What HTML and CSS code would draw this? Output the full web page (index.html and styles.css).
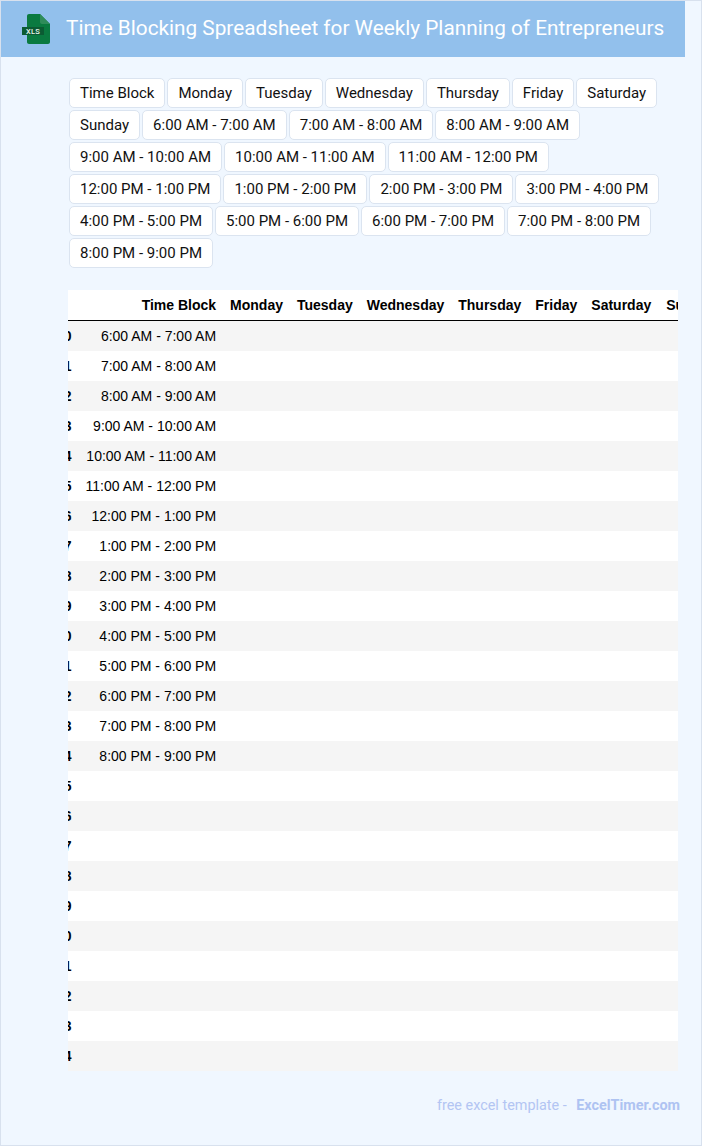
FILE: index.html
```html
<!DOCTYPE html>
<html lang="en">
<head>
<meta charset="utf-8">
<title>Time Blocking Spreadsheet for Weekly Planning of Entrepreneurs</title>
<link rel="stylesheet" href="styles.css">
</head>
<body>
<div class="page">
  <header class="banner">
    <svg class="logo" width="28" height="30" viewBox="0 0 28 30" aria-hidden="true">
      <path d="M5 2C5 .9 5.900 0 7 0h11l10 10v18c0 1.100-.9 2-2 2H7c-1.100 0-2-.9-2-2z" fill="#0a7a40"/>
      <path d="M18 0l10 10h-8c-1.100 0-2-.9-2-2z" fill="#2f8c5a"/>
      <rect x="0" y="13" width="22" height="8" fill="#0b5b33"/>
      <text x="11" y="19.800" class="logo-text" text-anchor="middle">XLS</text>
    </svg>
    <h1 class="title">Time Blocking Spreadsheet for Weekly Planning of Entrepreneurs</h1>
  </header>
  <main class="content">
    <div class="tags">
      <span class="tag">Time Block</span>
      <span class="tag">Monday</span>
      <span class="tag">Tuesday</span>
      <span class="tag">Wednesday</span>
      <span class="tag">Thursday</span>
      <span class="tag">Friday</span>
      <span class="tag">Saturday</span>
      <span class="tag">Sunday</span>
      <span class="tag">6:00 AM - 7:00 AM</span>
      <span class="tag">7:00 AM - 8:00 AM</span>
      <span class="tag">8:00 AM - 9:00 AM</span>
      <span class="tag">9:00 AM - 10:00 AM</span>
      <span class="tag">10:00 AM - 11:00 AM</span>
      <span class="tag">11:00 AM - 12:00 PM</span>
      <span class="tag">12:00 PM - 1:00 PM</span>
      <span class="tag">1:00 PM - 2:00 PM</span>
      <span class="tag">2:00 PM - 3:00 PM</span>
      <span class="tag">3:00 PM - 4:00 PM</span>
      <span class="tag">4:00 PM - 5:00 PM</span>
      <span class="tag">5:00 PM - 6:00 PM</span>
      <span class="tag">6:00 PM - 7:00 PM</span>
      <span class="tag">7:00 PM - 8:00 PM</span>
      <span class="tag">8:00 PM - 9:00 PM</span>
    </div>
    <div class="table-wrap">
      <table class="sheet">
        <thead>
          <tr><th></th><th>Time Block</th><th>Monday</th><th>Tuesday</th><th>Wednesday</th><th>Thursday</th><th>Friday</th><th>Saturday</th><th class="last-col">Sunday</th></tr>
        </thead>
        <tbody>
          <tr><th>0</th><td>6:00 AM - 7:00 AM</td><td></td><td></td><td></td><td></td><td></td><td></td><td></td></tr>
          <tr><th>1</th><td>7:00 AM - 8:00 AM</td><td></td><td></td><td></td><td></td><td></td><td></td><td></td></tr>
          <tr><th>2</th><td>8:00 AM - 9:00 AM</td><td></td><td></td><td></td><td></td><td></td><td></td><td></td></tr>
          <tr><th>3</th><td>9:00 AM - 10:00 AM</td><td></td><td></td><td></td><td></td><td></td><td></td><td></td></tr>
          <tr><th>4</th><td>10:00 AM - 11:00 AM</td><td></td><td></td><td></td><td></td><td></td><td></td><td></td></tr>
          <tr><th>5</th><td>11:00 AM - 12:00 PM</td><td></td><td></td><td></td><td></td><td></td><td></td><td></td></tr>
          <tr><th>6</th><td>12:00 PM - 1:00 PM</td><td></td><td></td><td></td><td></td><td></td><td></td><td></td></tr>
          <tr><th>7</th><td>1:00 PM - 2:00 PM</td><td></td><td></td><td></td><td></td><td></td><td></td><td></td></tr>
          <tr><th>8</th><td>2:00 PM - 3:00 PM</td><td></td><td></td><td></td><td></td><td></td><td></td><td></td></tr>
          <tr><th>9</th><td>3:00 PM - 4:00 PM</td><td></td><td></td><td></td><td></td><td></td><td></td><td></td></tr>
          <tr><th>10</th><td>4:00 PM - 5:00 PM</td><td></td><td></td><td></td><td></td><td></td><td></td><td></td></tr>
          <tr><th>11</th><td>5:00 PM - 6:00 PM</td><td></td><td></td><td></td><td></td><td></td><td></td><td></td></tr>
          <tr><th>12</th><td>6:00 PM - 7:00 PM</td><td></td><td></td><td></td><td></td><td></td><td></td><td></td></tr>
          <tr><th>13</th><td>7:00 PM - 8:00 PM</td><td></td><td></td><td></td><td></td><td></td><td></td><td></td></tr>
          <tr><th>14</th><td>8:00 PM - 9:00 PM</td><td></td><td></td><td></td><td></td><td></td><td></td><td></td></tr>
          <tr><th>15</th><td></td><td></td><td></td><td></td><td></td><td></td><td></td><td></td></tr>
          <tr><th>16</th><td></td><td></td><td></td><td></td><td></td><td></td><td></td><td></td></tr>
          <tr><th>17</th><td></td><td></td><td></td><td></td><td></td><td></td><td></td><td></td></tr>
          <tr><th>18</th><td></td><td></td><td></td><td></td><td></td><td></td><td></td><td></td></tr>
          <tr><th>19</th><td></td><td></td><td></td><td></td><td></td><td></td><td></td><td></td></tr>
          <tr><th>20</th><td></td><td></td><td></td><td></td><td></td><td></td><td></td><td></td></tr>
          <tr><th>21</th><td></td><td></td><td></td><td></td><td></td><td></td><td></td><td></td></tr>
          <tr><th>22</th><td></td><td></td><td></td><td></td><td></td><td></td><td></td><td></td></tr>
          <tr><th>23</th><td></td><td></td><td></td><td></td><td></td><td></td><td></td><td></td></tr>
          <tr><th>24</th><td></td><td></td><td></td><td></td><td></td><td></td><td></td><td></td></tr>
        </tbody>
      </table>
    </div>
    <footer class="credit">free excel template - <a class="credit-link" href="#">ExcelTimer.com</a></footer>
  </main>
</div>
</body>
</html>
```
FILE: styles.css
```css
* { box-sizing: border-box; }
html, body { margin: 0; padding: 0; }
body { font-family: Roboto, "Liberation Sans", sans-serif; background: #f0f7ff; }
.page {
  width: 702px;
  height: 1146px;
  border: 1px solid #d8e1ee;
  background: #f0f7ff;
  overflow: hidden;
}
.banner {
  display: flex;
  align-items: center;
  width: 684px;
  height: 56px;
  padding-left: 21px;
  gap: 16px;
  background: #92c0ec;
}
.logo { flex: none; width: 28px; height: 30px; }
.logo-text { font: 500 7.500px Roboto, "Liberation Sans", sans-serif; fill: #e8f5ee; letter-spacing: .3px; }
.title {
  margin: 0 0 2px;
  font-size: 20.770px;
  font-weight: 400;
  line-height: 28px;
  color: #fff;
  white-space: nowrap;
}
.content { padding: 21px 0 0 67px; }
.tags {
  display: flex;
  flex-wrap: wrap;
  gap: 2px;
  width: 600px;
  margin-left: 1px;
}
.tag {
  height: 30px;
  padding: 0 10px;
  border: 1px solid #dbe4f0;
  border-radius: 5px;
  background: #fff;
  color: #111;
  font-size: 15px;
  line-height: 28px;
  white-space: nowrap;
}
.table-wrap {
  width: 610px;
  margin-top: 22px;
  overflow: hidden;
}
.sheet {
  margin-left: -19px;
  border-collapse: separate;
  border-spacing: 0;
  background: #fff;
  font-family: "Liberation Sans", Arial, sans-serif;
  font-size: 14px;
  color: #000;
}
.sheet th, .sheet td {
  height: 30px;
  padding: 0 7px;
  text-align: right;
  white-space: nowrap;
}
.sheet thead th { height: 31px; border-bottom: 1px solid #000; }
.sheet thead th.last-col { padding-left: 8px; }
.sheet tbody tr:nth-child(odd) { background: #f5f5f5; }
.credit {
  width: 612px;
  margin-top: 25px;
  text-align: right;
  font-size: 14.400px;
  line-height: 20px;
  color: #b3c5f3;
}
.credit-link {
  margin-left: 6px;
  font-weight: 700;
  color: #aec3f2;
  text-decoration: none;
}
```
